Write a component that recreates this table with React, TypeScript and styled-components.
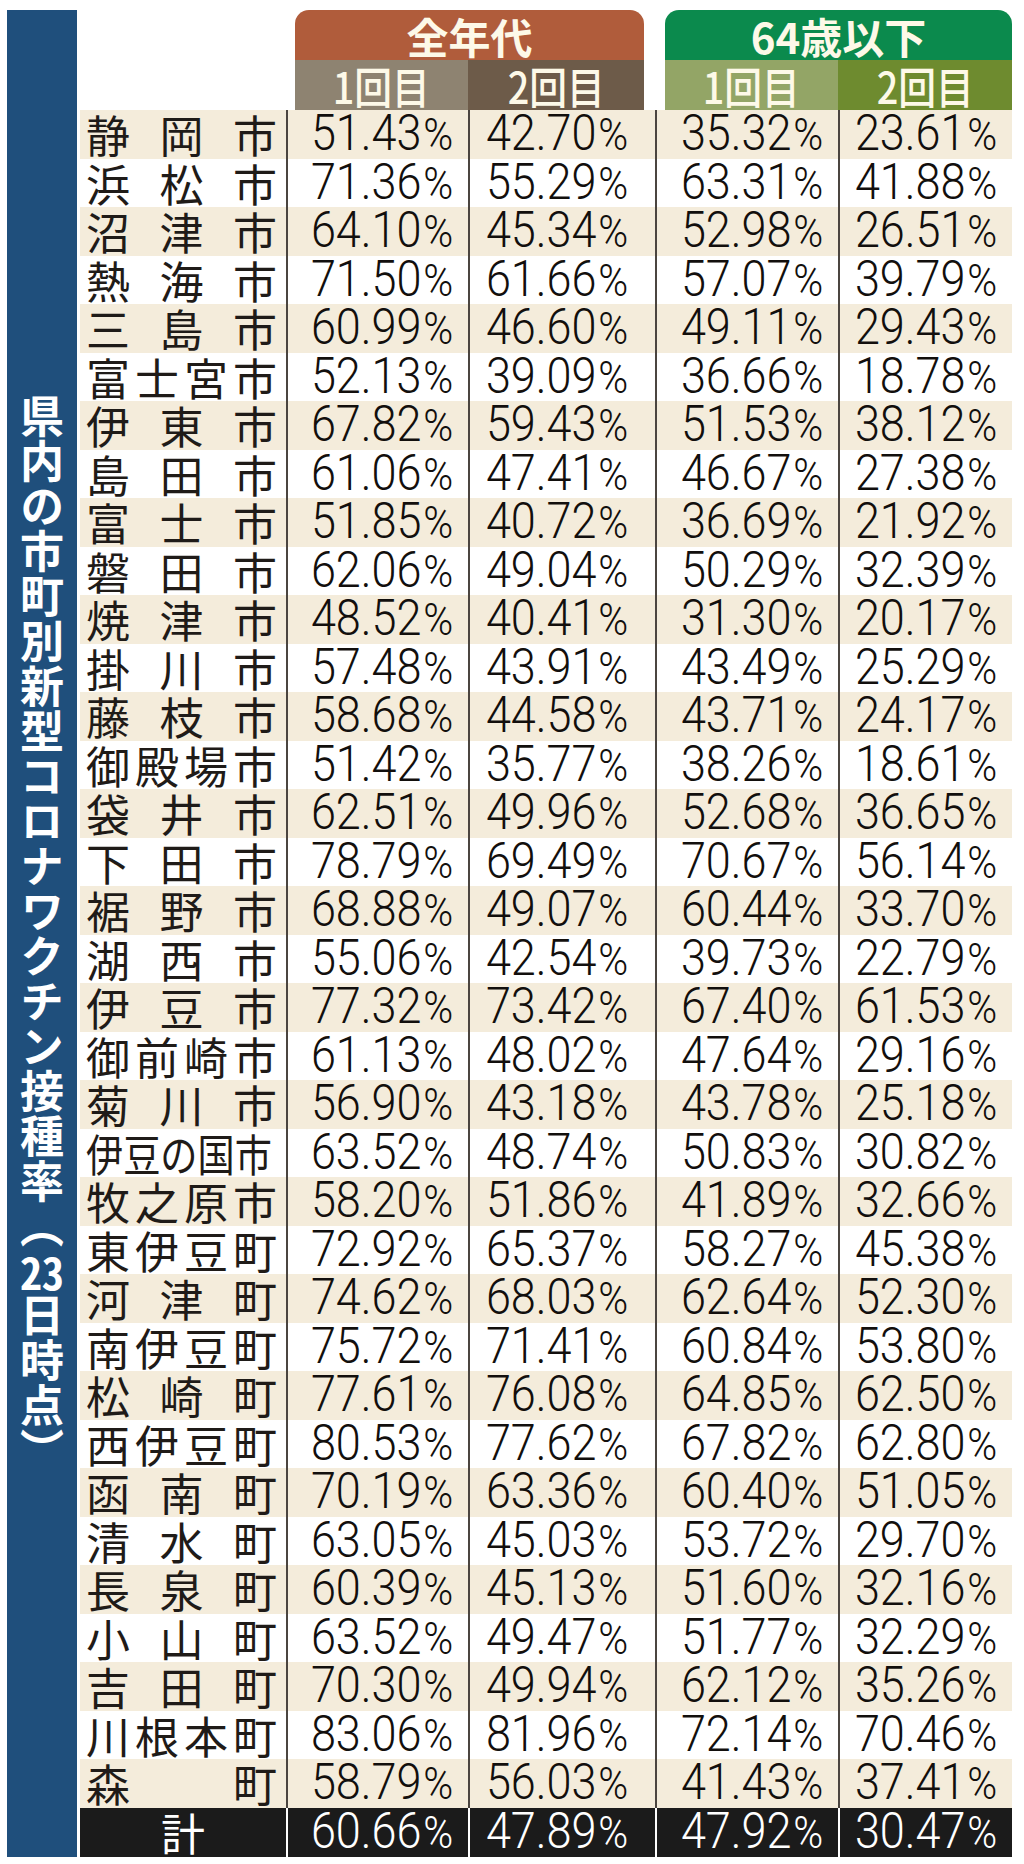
import React from "react";
import styled, { createGlobalStyle } from "styled-components";

const GlobalStyle = createGlobalStyle`
  html, body {
    margin: 0;
    padding: 0;
    background: #ffffff;
  }
  body {
    font-family: "Noto Sans CJK JP", "Noto Sans", sans-serif;
    color: #231f1c;
  }
`;

const COLS = "206px 182px 187px 183px 174px";
const JP = `"Noto Sans CJK JP", "Noto Sans", sans-serif`;

const Page = styled.div`
  display: flex;
  gap: 3px;
  width: 1024px;
  padding: 10px 12px 7px 7px;
  box-sizing: border-box;
`;

const SideBar = styled.div`
  width: 70px;
  background: #1f4f7c;
  display: flex;
  align-items: center;
  justify-content: center;
`;

const SideTitle = styled.h1`
  margin: 0;
  writing-mode: vertical-rl;
  text-orientation: mixed;
  font-family: ${JP};
  font-size: 44px;
  font-weight: 700;
  line-height: 1;
  color: #ffffff;
  letter-spacing: 1px;

  span {
    text-combine-upright: all;
  }
`;

const Table = styled.div`
  width: 932px;
  display: flex;
  flex-direction: column;
`;

const HeaderRow = styled.div`
  display: grid;
  grid-template-columns: ${COLS};
  height: 100px;
`;

const Group = styled.div<{ $area: string; $margin: string }>`
  grid-column: ${(p) => p.$area};
  margin: ${(p) => p.$margin};
  display: grid;
  grid-template-columns: 173px 1fr;
  grid-template-rows: 50px 50px;
`;

const GroupTitle = styled.div<{ $bg: string }>`
  grid-column: 1 / -1;
  background: ${(p) => p.$bg};
  border-radius: 14px 14px 0 0;
  display: flex;
  align-items: center;
  justify-content: center;
  font-family: ${JP};
  font-size: 42px;
  font-weight: 700;
  color: #fdf9e8;
  line-height: 46px;
  padding-top: 2px;
`;

const SubHead = styled.div<{ $bg: string }>`
  background: ${(p) => p.$bg};
  display: flex;
  align-items: center;
  justify-content: center;
  font-family: ${JP};
  font-size: 43px;
  font-weight: 500;
  color: #fdf9e8;
  line-height: 46px;

  span {
    display: inline-block;
    transform: scaleX(0.88);
  }
`;

const Row = styled.div<{ $shaded: boolean }>`
  display: grid;
  grid-template-columns: ${COLS};
  height: 48.5px;
  background: ${(p) => (p.$shaded ? "#f4ecdb" : "#ffffff")};
`;

const NameCell = styled.div`
  font-family: ${JP};
  font-size: 44px;
  line-height: 46px;
  padding: 1px 9px 0 6px;
  white-space: nowrap;
  text-align: justify;
  text-align-last: justify;
  color: #1f1b18;
`;

const NarrowName = styled.span`
  display: inline-block;
  transform: scaleX(0.845);
  transform-origin: left center;
  margin-right: -34px;
`;

const ValueCell = styled.div<{ $pad: string }>`
  border-left: 2px solid #4b4540;
  padding: ${(p) => p.$pad};
  display: flex;
  align-items: center;
  justify-content: center;
`;

const Num = styled.span<{ $light?: boolean }>`
  display: inline-block;
  font-family: Roboto, "Liberation Sans", Arial, sans-serif;
  font-weight: 300;
  font-size: 50px;
  line-height: 46px;
  color: ${(p) => (p.$light ? "#ffffff" : "#120f0d")};
  transform: scaleX(0.9);
  white-space: nowrap;
`;

const Pct = styled.span`
  font-size: 0.9em;
  margin-left: 0.04em;
`;

const TotalRow = styled.div`
  display: grid;
  grid-template-columns: ${COLS};
  height: 49px;
  background: #1b1b1b;
`;

const TotalName = styled.div`
  font-family: ${JP};
  font-size: 44px;
  line-height: 48px;
  text-align: center;
  color: #ffffff;
`;

const TotalCell = styled(ValueCell)`
  border-left: 2px solid #ffffff;
`;

const PADS = ["0 0 0 7px", "0 11px 0 0", "0 0 0 8px", "0"];

const rows: [string, string, string, string, string][] = [
  ["静岡市", "51.43", "42.70", "35.32", "23.61"],
  ["浜松市", "71.36", "55.29", "63.31", "41.88"],
  ["沼津市", "64.10", "45.34", "52.98", "26.51"],
  ["熱海市", "71.50", "61.66", "57.07", "39.79"],
  ["三島市", "60.99", "46.60", "49.11", "29.43"],
  ["富士宮市", "52.13", "39.09", "36.66", "18.78"],
  ["伊東市", "67.82", "59.43", "51.53", "38.12"],
  ["島田市", "61.06", "47.41", "46.67", "27.38"],
  ["富士市", "51.85", "40.72", "36.69", "21.92"],
  ["磐田市", "62.06", "49.04", "50.29", "32.39"],
  ["焼津市", "48.52", "40.41", "31.30", "20.17"],
  ["掛川市", "57.48", "43.91", "43.49", "25.29"],
  ["藤枝市", "58.68", "44.58", "43.71", "24.17"],
  ["御殿場市", "51.42", "35.77", "38.26", "18.61"],
  ["袋井市", "62.51", "49.96", "52.68", "36.65"],
  ["下田市", "78.79", "69.49", "70.67", "56.14"],
  ["裾野市", "68.88", "49.07", "60.44", "33.70"],
  ["湖西市", "55.06", "42.54", "39.73", "22.79"],
  ["伊豆市", "77.32", "73.42", "67.40", "61.53"],
  ["御前崎市", "61.13", "48.02", "47.64", "29.16"],
  ["菊川市", "56.90", "43.18", "43.78", "25.18"],
  ["伊豆の国市", "63.52", "48.74", "50.83", "30.82"],
  ["牧之原市", "58.20", "51.86", "41.89", "32.66"],
  ["東伊豆町", "72.92", "65.37", "58.27", "45.38"],
  ["河津町", "74.62", "68.03", "62.64", "52.30"],
  ["南伊豆町", "75.72", "71.41", "60.84", "53.80"],
  ["松崎町", "77.61", "76.08", "64.85", "62.50"],
  ["西伊豆町", "80.53", "77.62", "67.82", "62.80"],
  ["函南町", "70.19", "63.36", "60.40", "51.05"],
  ["清水町", "63.05", "45.03", "53.72", "29.70"],
  ["長泉町", "60.39", "45.13", "51.60", "32.16"],
  ["小山町", "63.52", "49.47", "51.77", "32.29"],
  ["吉田町", "70.30", "49.94", "62.12", "35.26"],
  ["川根本町", "83.06", "81.96", "72.14", "70.46"],
  ["森町", "58.79", "56.03", "41.43", "37.41"],
];

const totals = ["60.66", "47.89", "47.92", "30.47"];

const Value = ({ v, light }: { v: string; light?: boolean }) => (
  <Num $light={light}>
    {v}
    <Pct>%</Pct>
  </Num>
);

export default function App() {
  return (
    <>
      <GlobalStyle />
      <Page>
        <SideBar>
          <SideTitle>
            県内の市町別新型コロナワクチン接種率（<span>23</span>日時点）
          </SideTitle>
        </SideBar>
        <Table>
          <HeaderRow>
            <Group $area="2 / 4" $margin="0 11px 0 9px">
              <GroupTitle $bg="#b05c3b">全年代</GroupTitle>
              <SubHead $bg="#8e8371">
                <span>1回目</span>
              </SubHead>
              <SubHead $bg="#6d5b49">
                <span>2回目</span>
              </SubHead>
            </Group>
            <Group $area="4 / 6" $margin="0 0 0 10px">
              <GroupTitle $bg="#0b8a4d">64歳以下</GroupTitle>
              <SubHead $bg="#93a566">
                <span>1回目</span>
              </SubHead>
              <SubHead $bg="#6e8b2f">
                <span>2回目</span>
              </SubHead>
            </Group>
          </HeaderRow>
          {rows.map(([name, ...vals], i) => (
            <Row key={name} $shaded={i % 2 === 0}>
              <NameCell>
                {name.length > 4 ? <NarrowName>{name}</NarrowName> : name}
              </NameCell>
              {vals.map((v, j) => (
                <ValueCell key={j} $pad={PADS[j]}>
                  <Value v={v} />
                </ValueCell>
              ))}
            </Row>
          ))}
          <TotalRow>
            <TotalName>計</TotalName>
            {totals.map((v, j) => (
              <TotalCell key={j} $pad={PADS[j]}>
                <Value v={v} light />
              </TotalCell>
            ))}
          </TotalRow>
        </Table>
      </Page>
    </>
  );
}
